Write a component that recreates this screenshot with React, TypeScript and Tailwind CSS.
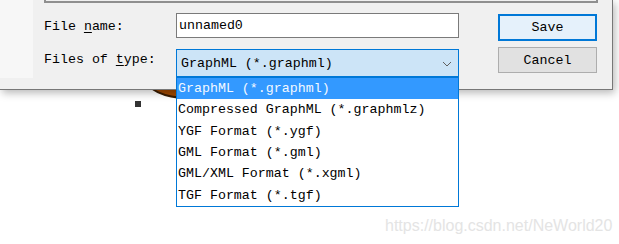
const fileTypes = [
  "GraphML (*.graphml)",
  "Compressed GraphML (*.graphmlz)",
  "YGF Format (*.ygf)",
  "GML Format (*.gml)",
  "GML/XML Format (*.xgml)",
  "TGF Format (*.tgf)",
];

export default function App() {
  return (
    <div className="relative w-[619px] h-[244px] overflow-hidden bg-white font-['Liberation_Mono',monospace] text-[13.3px] leading-[15px] text-black">
      {/* canvas behind the dialog */}
      <div className="absolute left-[145px] top-[58px] w-[84px] h-[41px] rounded-[50%] bg-[#a04800] border-2 border-[#3a1c00]" />
      <div className="absolute left-[135px] top-[101px] w-[6px] h-[6px] bg-[#333]" />

      {/* save dialog */}
      <div className="absolute left-0 top-0 w-[613px] h-[90px] bg-[#f0f0f0] border-r border-b border-[#777] shadow-[2px_3px_8px_rgba(0,0,0,0.28)]">
        <div className="flex">
          <div className="w-[33px] h-[78px] bg-[#f7f7f7]" />
          <div className="pl-[11px]">
            <div className="w-[554px] h-[3px] border-x-2 border-b-2 border-[#8f8f8f]" />
            <div className="flex mt-[10px]">
              <div className="grid grid-cols-[132px_283px] gap-y-[11px]">
                <div className="self-center pt-[1px]">
                  <span>File <span className="underline underline-offset-2">n</span>ame:</span>
                </div>
                <div className="h-[25px] bg-white border border-[#7a7a7a] flex items-center pl-[2px]">
                  unnamed0
                </div>
                <div className="pt-[3px]">
                  <span>Files of <span className="underline underline-offset-2">t</span>ype:</span>
                </div>
                <div className="h-[28px] bg-[#cce4f7] border border-[#0078d7] flex items-center justify-between pl-[4px] pr-[6px]">
                  <span className="pt-[1px]">GraphML (*.graphml)</span>
                  <svg width="10" height="6" viewBox="0 0 10 6" className="mt-[1px]">
                    <polyline points="1,1 5,5 9,1" fill="none" stroke="#606060" strokeWidth="1" />
                  </svg>
                </div>
              </div>
              <div className="ml-[39px] pt-[1px] flex flex-col gap-[6px]">
                <div className="w-[99px] h-[27px] bg-[#e5f1fb] border-2 border-[#0078d7] flex items-center justify-center">
                  Save
                </div>
                <div className="w-[99px] h-[26px] bg-[#e1e1e1] border border-[#adadad] flex items-center justify-center">
                  Cancel
                </div>
              </div>
            </div>
          </div>
        </div>
      </div>

      {/* open combo list */}
      <div className="absolute left-[176px] top-[77px] w-[283px] h-[130px] bg-white border border-[#0078d7]">
        {fileTypes.map((t, i) => (
          <div
            key={t}
            className={`h-[21.33px] flex items-center pl-[1px] ${i === 0 ? "bg-[#3399ff] text-[#f2f8ff]" : ""}`}
          >
            {t}
          </div>
        ))}
      </div>

      {/* watermark */}
      <div className="absolute left-[385px] top-[217px] font-['Liberation_Sans',Arial,sans-serif] text-[16px] leading-[18px] text-[#e4e4e4]">
        https://blog.csdn.net/NeWorld20
      </div>
    </div>
  );
}
